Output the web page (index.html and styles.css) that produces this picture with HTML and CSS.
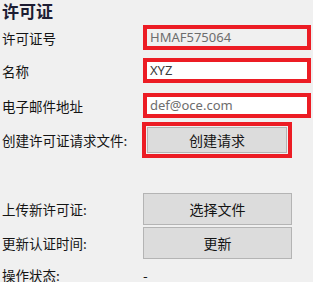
FILE: index.html
```html
<!DOCTYPE html>
<html>
<head>
<meta charset="utf-8">
<link rel="stylesheet" href="styles.css">
</head>
<body>
<div class="page">
  <div class="title">许可证</div>
  <div class="row r1">
    <div class="label">许可证号</div>
    <div class="mark field-mark"><div class="field ro">HMAF575064</div></div>
  </div>
  <div class="row r2">
    <div class="label">名称</div>
    <div class="mark field-mark"><div class="field">XYZ</div></div>
  </div>
  <div class="row r3">
    <div class="label">电子邮件地址</div>
    <div class="mark field-mark"><div class="field email">def@oce.com</div></div>
  </div>
  <div class="row r4">
    <div class="label">创建许可证请求文件:</div>
    <div class="mark btn-mark"><div class="btn inner">创建请求</div></div>
  </div>
  <div class="row r5">
    <div class="label">上传新许可证:</div>
    <div class="btn plain">选择文件</div>
  </div>
  <div class="row r6">
    <div class="label">更新认证时间:</div>
    <div class="btn plain">更新</div>
  </div>
  <div class="row r7">
    <div class="label">操作状态:</div>
    <div class="status">-</div>
  </div>
</div>
</body>
</html>
```
FILE: styles.css
```css
html, body {
  margin: 0;
  padding: 0;
  background: #f0f0f0;
  overflow: hidden;
}
.page {
  width: 313px;
  height: 282px;
  overflow: hidden;
  font-family: "Noto Sans CJK SC", "Noto Sans", sans-serif;
  font-size: 13.5px;
  color: #141414;
  display: flex;
  flex-direction: column;
}
.title {
  flex: none;
  height: 22px;
  line-height: 22px;
  padding-left: 2px;
  font-size: 17px;
  font-weight: bold;
  color: #1d1d33;
}
.row {
  flex: none;
  display: flex;
  align-items: center;
}
.label {
  width: 141px;
  padding-left: 2px;
  flex: none;
  white-space: nowrap;
}
.r1 { margin-top: 3px; height: 25px; }
.r2 { margin-top: 8px; height: 25px; }
.r3 { margin-top: 10px; height: 25px; }
.r4 { margin-top: 4px; height: 36px; }
.r5 { margin-top: 35px; height: 32px; }
.r6 { margin-top: 2px; height: 32px; }
.r7 { margin-top: 5px; height: 22px; }
.mark {
  box-sizing: border-box;
  border: 4px solid #ec1c24;
  height: 100%;
}
.field-mark {
  width: 168px;
}
.field {
  box-sizing: border-box;
  height: 100%;
  background: #ffffff;
  padding-left: 3px;
  line-height: 17px;
  font-family: "Noto Sans", sans-serif;
  font-size: 13px;
  color: #3a3a3a;
}
.field.ro {
  background: #f0f0f0;
  color: #6d6d6d;
}
.field.email {
  color: #6d6d6d;
}
.btn-mark {
  width: 150px;
  margin-left: -1px;
  padding: 1px;
  background: #f0f0f0;
}
.btn {
  box-sizing: border-box;
  display: flex;
  align-items: center;
  justify-content: center;
  background: #dcdcdc;
  border: 1px solid #b4b4b4;
  color: #141414;
  font-size: 14px;
}
.btn.inner {
  height: 100%;
}
.btn.plain {
  width: 149px;
  height: 100%;
}
.status {
  padding-left: 0;
}
```
